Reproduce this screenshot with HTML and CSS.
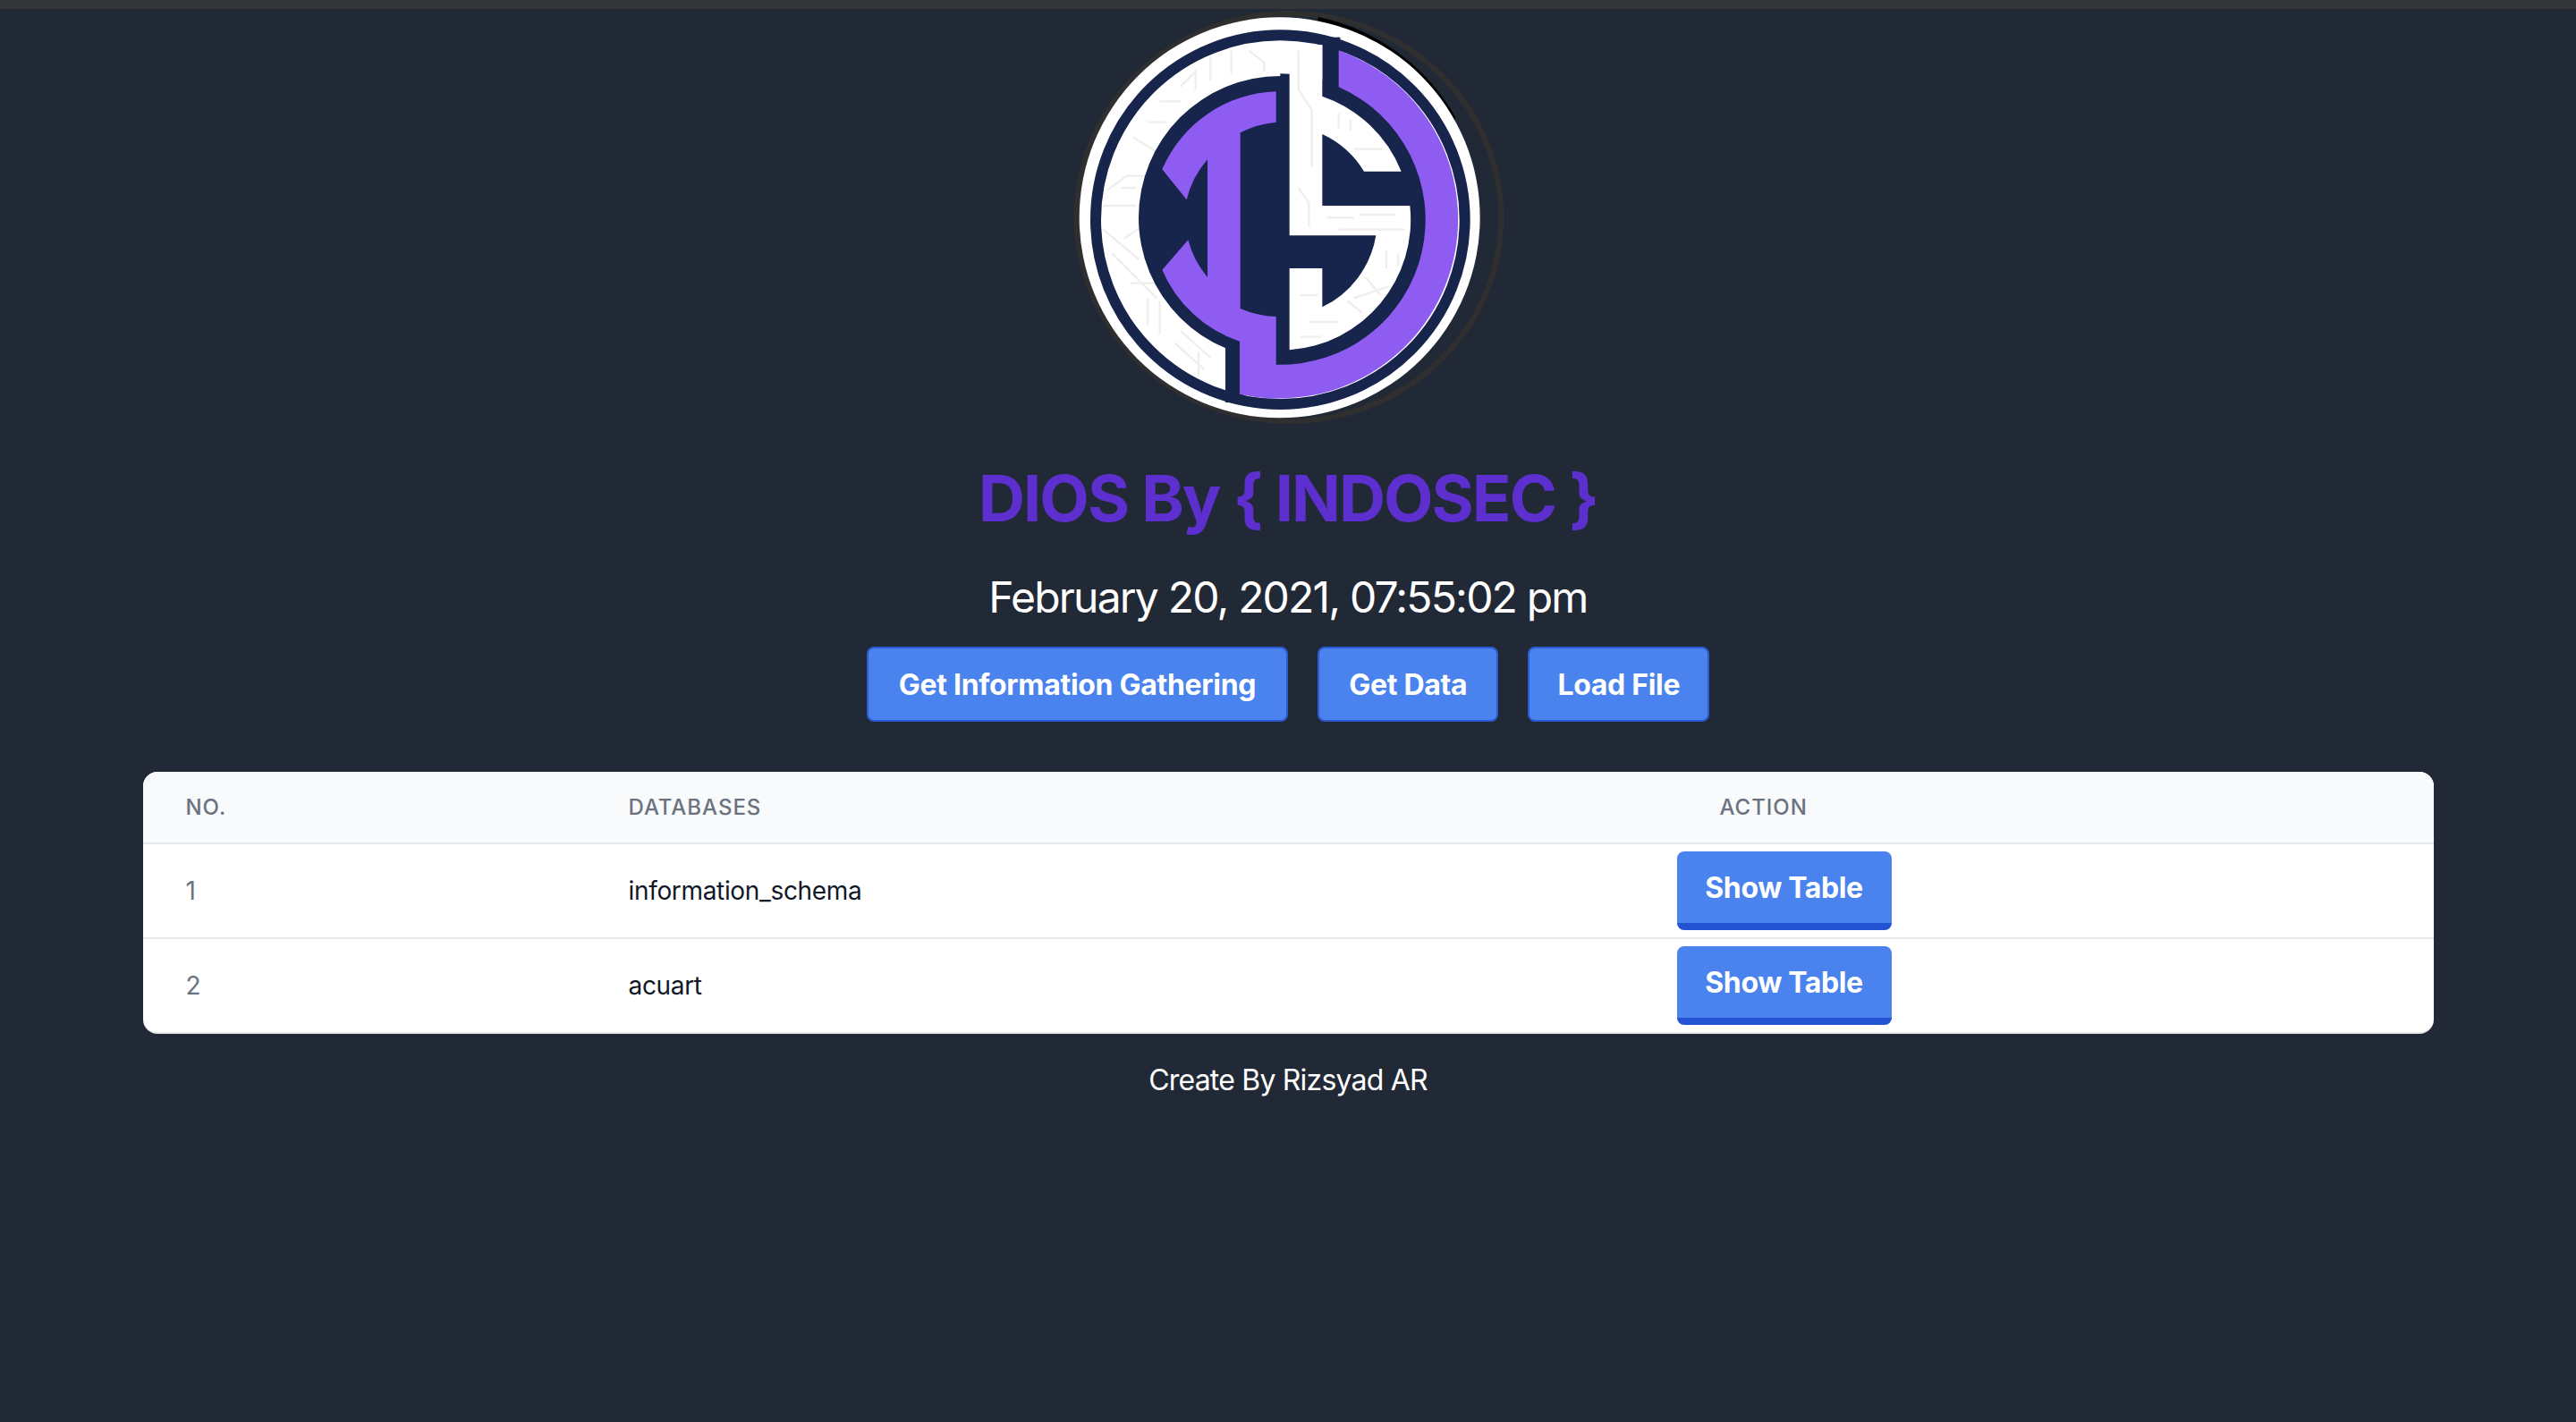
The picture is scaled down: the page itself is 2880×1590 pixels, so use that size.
FILE: index.html
```html
<!DOCTYPE html>
<html lang="en">
<head>
    <meta charset="utf-8">
    <title>DIOS By { INDOSEC }</title>
    <link rel="stylesheet" href="styles.css">
</head>
<body>
    <div class="topbar"></div>
    <div class="page">
        <svg class="logo" viewBox="0 30 1560 1440" aria-label="Logo">
            <ellipse cx="783" cy="729" rx="712" ry="684" fill="none" stroke="#302f30" stroke-width="18"/>
            <path d="M880 66 A682 682 0 0 1 1335 400" fill="none" stroke="#000" stroke-width="18"/>
            <circle cx="752" cy="730" r="672" fill="#fff"/>
            <circle cx="754" cy="737" r="619" fill="none" stroke="#17244c" stroke-width="36"/>
            <g class="traces">
                <path d="M170 640 L240 590 L330 590 M160 690 L270 690 M220 630 L270 630 M160 770 L280 870 M190 850 L340 1000 M250 950 L340 950 L420 1020"/>
                <path d="M310 1000 L310 1090 M350 1010 L350 1120 M420 1110 L520 1200 M400 1150 L500 1240 M480 1180 L480 1260 M230 800 L290 760"/>
                <path d="M420 290 L470 240 L470 300 M520 190 L520 270 M590 170 L590 250 M650 170 L700 210 L700 240 M310 410 L370 410 M260 460 L340 510 M350 340 L420 340"/>
            </g>
            <path d="M754 255 A475 475 0 0 0 754 1205 L754 1227 A490 490 0 0 0 754 247 Z" fill="#17244c"/>
            <rect x="895" y="125" width="60" height="215" fill="#17244c"/>
            <rect x="570" y="1150" width="60" height="200" fill="#17244c"/>
            <rect x="735" y="1050" width="55" height="185" fill="#17244c"/>
            <path d="M950 169 A601 601 0 0 1 618 1322 L618 1145 A430 430 0 0 1 358 905 L445 805 A316 316 0 0 0 510 930 L510 535 A316 316 0 0 0 440 670 L358 568 A430 430 0 0 1 740 307 L740 410 A321 321 0 0 0 620 445 L620 1035 A321 321 0 0 0 740 1062 L740 1223 A486 486 0 0 0 950 292 Z" fill="#8f5cf2"/>
            <path d="M785 150 L895 150 L895 323 A438 438 0 0 1 1160 575 L1035 575 A322 322 0 0 0 895 450 L895 690 L1189 690 A438 438 0 0 1 785 1174 L785 900 L895 900 L895 1030 A325 325 0 0 0 1075 790 L785 790 Z" fill="#fff"/>
            <g class="traces">
                <path d="M815 170 L815 300 L860 370 L860 560 M815 630 L850 680 L850 760 M910 730 L1000 730 M1020 720 L1140 720 M950 770 L1170 770"/>
                <path d="M1110 840 L1110 900 M1150 850 L1150 890 M820 990 L880 990 M850 1080 L950 1080 M980 1010 L1030 1050 M950 380 L950 430 M990 400 L990 440 M1000 500 L1100 500"/>
                <path d="M1040 930 L1090 990 M1000 1000 L1120 960 M820 1130 L890 1130"/>
            </g>
        </svg>
        <h1 class="title">DIOS By { INDOSEC }</h1>
        <p class="clock">February 20, 2021, 07:55:02 pm</p>
        <div class="actions">
            <button type="button" class="btn btn-wide">Get Information Gathering</button>
            <button type="button" class="btn">Get Data</button>
            <button type="button" class="btn btn-narrow">Load File</button>
        </div>
        <div class="table-wrap">
            <table class="data">
                <colgroup>
                    <col class="col-no">
                    <col class="col-db">
                    <col class="col-action">
                </colgroup>
                <thead>
                    <tr>
                        <th>No.</th>
                        <th>Databases</th>
                        <th>Action</th>
                    </tr>
                </thead>
                <tbody>
                    <tr>
                        <td class="num">1</td>
                        <td class="name">information_schema</td>
                        <td class="cell-btn"><button type="button" class="btn-show">Show Table</button></td>
                    </tr>
                    <tr>
                        <td class="num">2</td>
                        <td class="name">acuart</td>
                        <td class="cell-btn"><button type="button" class="btn-show">Show Table</button></td>
                    </tr>
                </tbody>
            </table>
        </div>
        <p class="credit">Create By Rizsyad AR</p>
    </div>
</body>
</html>
```

FILE: styles.css
```css
* {
    box-sizing: border-box;
}

html, body {
    height: 100%;
}

body {
    margin: 0;
    background-color: #222936;
    font-family: "Inter", "Liberation Sans", sans-serif;
    overflow: hidden;
}

.topbar {
    height: 10px;
    background-color: #333538;
}

.page {
    display: flex;
    flex-direction: column;
    align-items: center;
}

.logo {
    display: block;
    width: 520px;
    height: 480px;
}

.traces {
    fill: none;
    stroke: #eeeeec;
    stroke-width: 7;
}

.title {
    margin: 27px 0 0;
    font-size: 72px;
    line-height: 80px;
    font-weight: 700;
    letter-spacing: -1.9px;
    color: #5d2fce;
}

.clock {
    margin: 39px 0 0;
    font-size: 48px;
    line-height: 64px;
    letter-spacing: -1.8px;
    color: #fff;
}

.actions {
    display: flex;
    gap: 33px;
    margin-top: 23px;
}

.btn {
    height: 84px;
    padding: 0 33px;
    border: 2px solid #2a5bd0;
    border-radius: 8px;
    background-color: #4a83ee;
    color: #fff;
    font-family: inherit;
    font-size: 32px;
    font-weight: 700;
    letter-spacing: -0.3px;
}

.btn-wide {
    padding: 0 34px;
}

.btn-narrow {
    padding: 0 31px;
}

.table-wrap {
    width: 2561px;
    margin-top: 56px;
    background-color: #fff;
    border-bottom: 2px solid #e5e7eb;
    border-radius: 16px;
    overflow: hidden;
}

.data {
    width: 100%;
    table-layout: fixed;
    border-collapse: collapse;
}

.col-no {
    width: 495px;
}

.col-db {
    width: 1220px;
}

.data thead tr {
    background-color: #f9fafb;
    border-bottom: 2px solid #e5e7eb;
}

.data th {
    height: 80px;
    padding: 0 48px;
    text-align: left;
    font-size: 24px;
    font-weight: 500;
    letter-spacing: 0.04em;
    text-transform: uppercase;
    color: #6b7280;
}

.data tbody tr + tr {
    border-top: 2px solid #e5e7eb;
}

.data td {
    height: 104px;
    padding: 8px 48px;
    font-size: 28px;
    letter-spacing: -0.33px;
}

.num {
    color: #6b7280;
}

.name {
    color: #111827;
}

.data .cell-btn {
    padding: 8px 0;
}

.btn-show {
    display: block;
    width: 240px;
    height: 88px;
    padding: 0;
    border: none;
    border-bottom: 8px solid #2353d3;
    border-radius: 8px;
    background-color: #4a83ee;
    color: #fff;
    font-family: inherit;
    font-size: 32px;
    font-weight: 700;
    letter-spacing: -0.4px;
}

.credit {
    margin: 32px 0 0;
    font-size: 32px;
    line-height: 40px;
    letter-spacing: -0.8px;
    color: #fff;
}
```
